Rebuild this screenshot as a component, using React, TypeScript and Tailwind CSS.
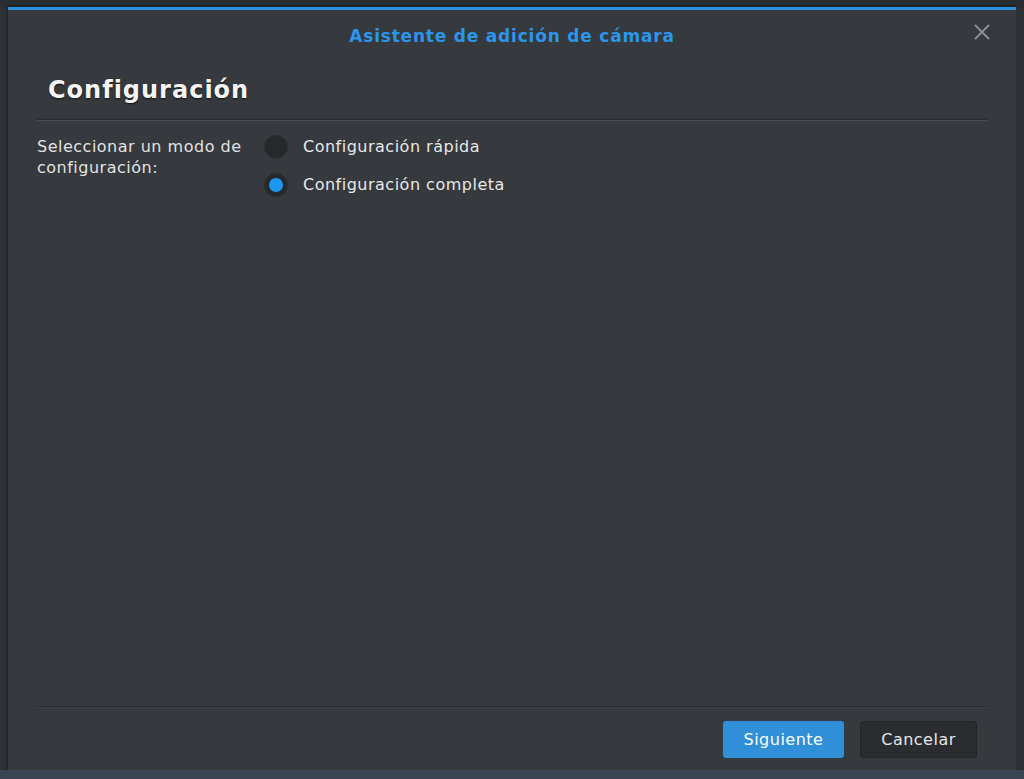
import { useState } from "react";

const font = { fontFamily: '"DejaVu Sans", Verdana, sans-serif' };

function Radio({ checked, onClick }: { checked: boolean; onClick: () => void }) {
  return (
    <button
      onClick={onClick}
      className="flex h-6 w-6 items-center justify-center rounded-full border border-[#2c2e31] bg-[#26282b]"
    >
      {checked && <span className="h-[14px] w-[14px] rounded-full bg-[#1d98f2]" />}
    </button>
  );
}

export default function App() {
  const [mode, setMode] = useState("full");

  return (
    <div className="flex h-[779px] w-[1024px] flex-col bg-[#2b2e32]" style={font}>
      <div className="h-[7px] bg-[#2a2d31]" />
      <div className="flex flex-1">
        <div className="w-[8px] bg-[#2f3236]" />
        <div className="flex flex-1 flex-col border-t-[3px] border-[#2b8fe0] bg-[#36393d] shadow-[0_0_4px_rgba(0,0,0,0.6)]">
          <div className="relative flex h-[50px] items-center justify-center pt-[3px]">
            <span className="text-[17px] font-bold tracking-[0.8px] text-[#2b96ec]">
              Asistente de adición de cámara
            </span>
            <button className="absolute right-[25px] top-[13px] text-[#8b8e92]">
              <svg width="18" height="18" viewBox="0 0 18 18" stroke="currentColor" strokeWidth="2">
                <path d="M2 2 L16 16 M16 2 L2 16" />
              </svg>
            </button>
          </div>
          <div className="px-[29px]">
            <div className="flex h-[59px] items-center pl-[11px] pt-[1px]">
              <h1 className="text-[24px] font-bold tracking-[1px] text-[#f4f4f4] [text-shadow:0_1px_2px_rgba(0,0,0,0.7)]">
                Configuración
              </h1>
            </div>
            <div className="h-[2px] border-t border-[#2a2c2f] bg-[#4a4d51]" />
            <div className="flex pt-[14px]">
              <div className="w-[227px] pt-[1px] text-[16px] leading-[21px] tracking-[0.5px] text-[#e2e2e2]">
                Seleccionar un modo de configuración:
              </div>
              <div className="flex flex-col gap-[14px]">
                <label className="flex items-center gap-[15px] text-[16px] tracking-[0.5px] text-[#e8e8e8]">
                  <Radio checked={mode === "quick"} onClick={() => setMode("quick")} />
                  Configuración rápida
                </label>
                <label className="flex items-center gap-[15px] text-[16px] tracking-[0.5px] text-[#e8e8e8]">
                  <Radio checked={mode === "full"} onClick={() => setMode("full")} />
                  Configuración completa
                </label>
              </div>
            </div>
          </div>
          <div className="flex-1" />
          <div className="px-[29px]">
            <div className="h-[2px] border-t border-[#2a2c2f] bg-[#3f4246]" />
            <div className="flex justify-end gap-[16px] pb-[12px] pr-[10px] pt-[13px]">
              <button className="h-[37px] w-[121px] rounded-[3px] bg-[#2f8fd8] text-[16px] tracking-[0.5px] text-white">
                Siguiente
              </button>
              <button className="h-[37px] w-[117px] rounded-[3px] border border-[#232527] bg-[#2a2c2f] text-[16px] tracking-[0.5px] text-[#e6e6e6]">
                Cancelar
              </button>
            </div>
          </div>
        </div>
        <div className="w-[8px] bg-[#2c2f33]" />
      </div>
      <div className="h-[9px] bg-[#3a4453]" />
    </div>
  );
}
